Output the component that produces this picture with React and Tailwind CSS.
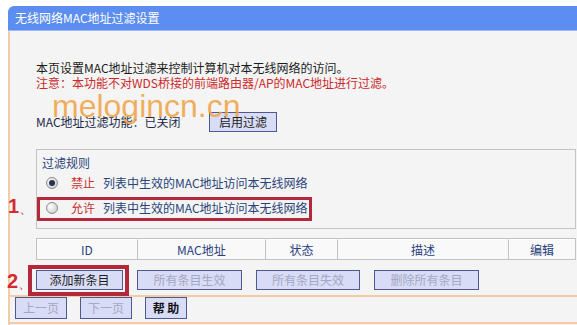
import React from 'react';

const font = "font-['Noto_Sans_CJK_SC','Liberation_Sans',sans-serif]";
const btn = 'h-[20px] border border-[#4e5a8e] bg-[#d9dcf6] text-[12px] leading-none flex items-center justify-center';
const off = 'text-[#a3a7c2]';

const Radio = ({ checked }) => (
  <span className="w-[12px] h-[12px] rounded-full border border-[#8c8c8c] bg-[radial-gradient(circle_at_35%_35%,#ffffff,#c4c4c4)] flex items-center justify-center shrink-0">
    {checked && <span className="w-[6px] h-[6px] rounded-full bg-[#253350]" />}
  </span>
);

const columns = [
  { label: 'ID', w: 'w-[101px]' },
  { label: 'MAC地址', w: 'w-[129px]' },
  { label: '状态', w: 'w-[72px]' },
  { label: '描述', w: 'w-[172px]' },
  { label: '编辑', w: 'w-[66px]' },
];

const App = () => {
  return (
    <div className={`w-[577px] h-[325px] bg-white overflow-hidden pt-[6px] pl-[8px] ${font}`}>
      <div className="flex flex-col h-full">
        {/* Title bar */}
        <div className="h-[25px] bg-[#5b8ef0] border-b border-[#9dbcf3] rounded-tl-[6px] text-white text-[12px] pl-[7px] flex items-center shrink-0">
          无线网络MAC地址过滤设置
        </div>

        {/* Body */}
        <div className="relative flex-1 bg-[#f4f4f4] border-l-2 border-[#f2cca6]">
          <div className="pl-[26px] pt-[29px] text-[12px] leading-[15px]">
            <p className="text-[#1c1c1c]">本页设置MAC地址过滤来控制计算机对本无线网络的访问。</p>
            <p className="text-[#cc2a2a]">注意：本功能不对WDS桥接的前端路由器/AP的MAC地址进行过滤。</p>

            <div className="flex items-center mt-[22px] h-[19px]">
              <span className="w-[173px] text-[#1c2a4a]">MAC地址过滤功能：已关闭</span>
              <button className={`${btn} w-[68px] h-[19px] text-[#1c1c1c]`}>启用过滤</button>
            </div>

            {/* Filter rule box */}
            <div className="mt-[18px] w-[540px] h-[80px] border border-[#c4c4c4] pt-[5px] text-[#2a4479]">
              <div className="h-[15px] pl-[5px]">过滤规则</div>
              <div className="h-[25px] flex items-center pl-[9px]">
                <Radio checked />
                <span className="ml-[13px] text-[#c8302e]">禁止</span>
                <span className="ml-[8px]">列表中生效的MAC地址访问本无线网络</span>
              </div>
              <div className="relative h-[25px] flex items-center pl-[9px]">
                <Radio />
                <span className="ml-[13px] text-[#c8302e]">允许</span>
                <span className="ml-[8px]">列表中生效的MAC地址访问本无线网络</span>
                <span className="absolute left-0 top-[2px] w-[275px] h-[24px] border-[3px] border-[#b3283a]" />
                <span className="absolute left-[-29px] top-[1px] text-[20px] leading-[20px] font-bold text-[#d42a32] font-['Liberation_Sans',sans-serif]">
                  1<span className="text-[14px] font-normal">、</span>
                </span>
              </div>
            </div>

            {/* Table header */}
            <div className="mt-[9px] w-[540px] h-[22px] flex border border-[#c2c2c2] bg-[#f9f9f9]">
              {columns.map((c, i) => (
                <div
                  key={c.label}
                  className={`${c.w} flex items-center justify-center text-[#27407a] border-t border-white ${i < columns.length - 1 ? 'border-r border-r-[#c2c2c2]' : ''}`}
                >
                  {c.label}
                </div>
              ))}
            </div>

            {/* Actions */}
            <div className="mt-[10px] flex gap-[14px]">
              <div className="relative">
                <button className={`${btn} w-[87px] text-[#1c1c1c]`}>添加新条目</button>
                <span className="absolute left-[-8px] top-[-5px] w-[101px] h-[31px] border-4 border-[#b3283a]" />
                <span className="absolute left-[-29px] top-[1px] text-[20px] leading-[20px] font-bold text-[#d42a32] font-['Liberation_Sans',sans-serif]">
                  2<span className="text-[14px] font-normal">、</span>
                </span>
              </div>
              <button className={`${btn} w-[105px] ${off}`}>所有条目生效</button>
              <button className={`${btn} w-[104px] ${off}`}>所有条目失效</button>
              <button className={`${btn} w-[105px] ${off}`}>删除所有条目</button>
            </div>
          </div>

          {/* Footer */}
          <div className="mt-[5px] border-t-2 border-b-2 border-[#f2cca6] pl-[5px] pb-[3px] flex gap-[13px]">
            <button className={`${btn} w-[52px] h-[22px] ${off}`}>上一页</button>
            <button className={`${btn} w-[52px] h-[22px] ${off}`}>下一页</button>
            <button className={`${btn} w-[42px] h-[22px] font-bold text-[#111]`}>帮&nbsp;助</button>
          </div>

          {/* Watermark */}
          <span className="absolute left-[42px] top-[59px] text-[32px] leading-[32px] text-[#f0a23e]/85 font-['Liberation_Sans',sans-serif] pointer-events-none">
            melogincn.cn
          </span>
        </div>
      </div>
    </div>
  );
};

export default App;
